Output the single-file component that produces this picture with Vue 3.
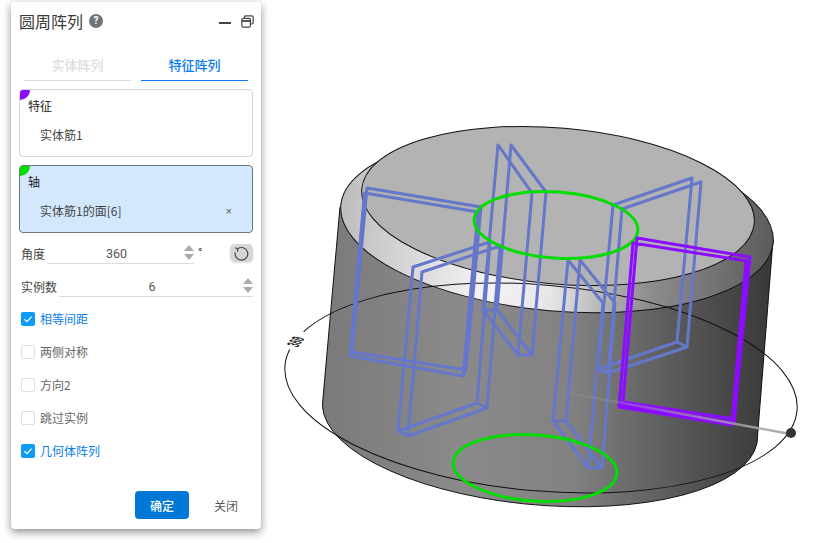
<template>
  <div class="page">
    <svg class="scene" viewBox="0 0 819 543" width="819" height="543">
      <defs>
        <linearGradient id="bodyGrad" gradientUnits="userSpaceOnUse" x1="323" y1="0" x2="773" y2="0">
          <stop offset="0" stop-color="#7a7a7a" />
          <stop offset="0.3" stop-color="#8a8a8a" />
          <stop offset="0.55" stop-color="#828282" />
          <stop offset="0.8" stop-color="#575757" />
          <stop offset="1" stop-color="#383838" />
        </linearGradient>
        <linearGradient id="lipGrad" gradientUnits="userSpaceOnUse" x1="340" y1="0" x2="773" y2="0">
          <stop offset="0" stop-color="#bdbdbd" />
          <stop offset="0.35" stop-color="#f4f4f4" />
          <stop offset="0.5" stop-color="#e6e6e6" />
          <stop offset="0.72" stop-color="#8f8f8f" />
          <stop offset="1" stop-color="#5c5c5c" />
        </linearGradient>
        <linearGradient id="axisGrad" gradientUnits="userSpaceOnUse" x1="553" y1="390" x2="790" y2="434">
          <stop offset="0" stop-color="#aaaaaa" stop-opacity="0" />
          <stop offset="1" stop-color="#a8a8a8" />
        </linearGradient>
      </defs>

      <!-- cylinder -->
      <path
        d="M340 207 L323 398 A217 84 5 0 0 757 443 L773 240 Z"
        fill="url(#bodyGrad)"
        stroke="#111"
        stroke-width="1"
      />
      <ellipse cx="557" cy="224" rx="217" ry="87" transform="rotate(5 557 224)" fill="url(#lipGrad)" stroke="#111" stroke-width="1" />
      <ellipse cx="558" cy="206" rx="197" ry="78" transform="rotate(5 558 206)" fill="#b3b3b3" stroke="#111" stroke-width="1" />

      <!-- sweep circle -->
      <ellipse cx="541" cy="388" rx="257" ry="103" transform="rotate(5 541 388)" fill="none" stroke="#111" stroke-width="1" />
      <path d="M304 332 L289 349" fill="none" stroke="#fff" stroke-width="4" />
      <text class="angle" text-anchor="middle" transform="matrix(0.35 -0.45 1.5 0.35 301 343)">360</text>

      <!-- ribs -->
      <path v-for="(rib, i) in ribs" :key="i" :d="ribPath(rib)" fill="none" stroke="#6577cb" stroke-width="3" stroke-linejoin="round" />
      <path d="M365 193 L351 355" fill="none" stroke="#6577cb" stroke-width="4" />

      <ellipse cx="556" cy="225" rx="82" ry="33" transform="rotate(4 556 225)" fill="none" stroke="#00dd00" stroke-width="3" />
      <ellipse cx="535" cy="468" rx="82" ry="33" transform="rotate(4 535 468)" fill="none" stroke="#00dd00" stroke-width="3" />

      <path :d="ribPath(selectedRib)" fill="none" stroke="#8c0cff" stroke-width="3" stroke-linejoin="round" />
      <path d="M747 261 L733 423" fill="none" stroke="#8c0cff" stroke-width="5" />
      <path d="M620 405 L733 423" fill="none" stroke="#8c0cff" stroke-width="4" />

      <path d="M553 390 L790 434" fill="none" stroke="url(#axisGrad)" stroke-width="2.5" />
      <circle cx="791" cy="433" r="5" fill="#333" />
    </svg>

    <div class="panel">
      <div class="panel-head">
        <span class="panel-title">圆周阵列</span>
        <span class="help">?</span>
        <span class="head-tools">
          <span class="minimize"></span>
          <svg width="13" height="13" viewBox="0 0 13 13" fill="none" stroke="#444" stroke-width="1.2">
            <rect x="0.8" y="3.4" width="8.6" height="8.8" rx="1.6" />
            <path d="M0.8 6 H9.4" stroke-width="1.8" />
            <path d="M3.4 3.2 V2.2 A1.4 1.4 0 0 1 4.8 0.8 H10.8 A1.4 1.4 0 0 1 12.2 2.2 V7.6 A1.4 1.4 0 0 1 10.8 9 H9.6" />
          </svg>
        </span>
      </div>

      <div class="tabs">
        <div class="tab disabled">实体阵列</div>
        <div class="tab active">特征阵列</div>
      </div>

      <div class="select-box">
        <span class="corner purple"></span>
        <div class="box-label">特征</div>
        <div class="box-item">实体筋1</div>
      </div>

      <div class="select-box focused">
        <span class="corner green"></span>
        <div class="box-label">轴</div>
        <div class="box-item">
          实体筋1的面[6]
          <span class="remove">×</span>
        </div>
      </div>

      <div class="field angle-field">
        <label>角度</label>
        <div class="num-input">
          <span class="num-value">360</span>
          <span class="spin"><i class="up"></i><i class="down"></i></span>
        </div>
        <span class="unit">°</span>
        <button class="reverse">
          <svg width="15" height="15" viewBox="0 0 14 14" fill="none" stroke="#444" stroke-width="1.1">
            <path d="M3.4 2.6 A5.9 5.9 0 1 1 1.2 6" />
            <path d="M1 1.6 L3.6 2.6 L3.2 5.2" />
          </svg>
        </button>
      </div>

      <div class="field">
        <label>实例数</label>
        <div class="num-input">
          <span class="num-value">6</span>
          <span class="spin"><i class="up"></i><i class="down"></i></span>
        </div>
      </div>

      <div class="checks">
        <div v-for="opt in options" :key="opt.label" class="check" :class="{ on: opt.checked }">
          <span class="check-box">
            <svg v-if="opt.checked" width="14" height="14" viewBox="0 0 14 14" fill="none" stroke="#fff" stroke-width="1.2">
              <path d="M3.4 7.2 L6 9.6 L10.6 4.6" />
            </svg>
          </span>
          {{ opt.label }}
        </div>
      </div>

      <div class="panel-foot">
        <button class="ok">确定</button>
        <button class="close">关闭</button>
      </div>
    </div>
  </div>
</template>

<script setup>
const ribs = [
  [[367, 188], [481, 207], [466, 370], [352, 352], [365, 193], [478, 212], [463, 376], [350, 356]],
  [[413, 267], [490, 242], [477, 403], [398, 431], [422, 272], [500, 246], [487, 408], [408, 436]],
  [[498, 145], [532, 193], [518, 355], [483, 310], [511, 145], [546, 192], [532, 355], [497, 310]],
  [[568, 260], [603, 303], [588, 468], [553, 421], [580, 260], [615, 303], [602, 468], [566, 421]],
  [[613, 205], [692, 178], [677, 342], [598, 369], [622, 209], [701, 182], [687, 347], [608, 373]],
]
const selectedRib = [[637, 238], [750, 257], [734, 419], [623, 402], [633, 243], [747, 261], [732, 425], [619, 407]]

const options = [
  { label: '相等间距', checked: true },
  { label: '两侧对称', checked: false },
  { label: '方向2', checked: false },
  { label: '跳过实例', checked: false },
  { label: '几何体阵列', checked: true },
]

// two open outlines (no top edge joining the faces) plus the bottom links
const ribPath = (p) => {
  const quad = (q) => 'M' + q.map((c) => c.join(' ')).join(' L') + ' Z'
  const links = [2, 3].map((i) => `M${p[i].join(' ')} L${p[i + 4].join(' ')}`)
  return [quad(p.slice(0, 4)), quad(p.slice(4)), ...links].join(' ')
}
</script>

<style>
body {
  background: #fff;
}
</style>

<style scoped>
.page {
  position: relative;
  width: 819px;
  height: 543px;
  overflow: hidden;
  font-family: "Noto Sans CJK SC", Roboto, sans-serif;
  font-size: 12px;
  color: #333;
}
.scene {
  position: absolute;
  left: 0;
  top: 0;
}
.angle {
  font-family: "Liberation Mono", monospace;
  font-size: 11px;
  fill: #000;
  stroke: #000;
  stroke-width: 0.3px;
}
.panel {
  position: absolute;
  left: 11px;
  top: 2px;
  width: 250px;
  height: 527px;
  box-sizing: border-box;
  padding: 0 8px;
  display: flex;
  flex-direction: column;
  background: #fff;
  border-radius: 4px;
  box-shadow: 0 3px 8px rgba(0, 0, 0, 0.45);
}
.panel-head {
  height: 38px;
  display: flex;
  align-items: center;
  flex-shrink: 0;
}
.panel-title {
  font-size: 16px;
  margin-top: -1px;
  color: #3a3a3a;
}
.help {
  width: 14px;
  height: 14px;
  margin-left: 6px;
  border-radius: 50%;
  background: #6c757d;
  color: #fff;
  font-family: Roboto, sans-serif;
  font-size: 10px;
  font-weight: 700;
  line-height: 14px;
  text-align: center;
}
.head-tools {
  margin-left: auto;
  margin-right: -1px;
  display: flex;
  align-items: center;
  gap: 10px;
}
.minimize {
  width: 12px;
  height: 2px;
  margin-top: 4px;
  background: #444;
}
.tabs {
  display: flex;
  gap: 10px;
  padding: 0 5px;
  flex-shrink: 0;
}
.tab {
  flex: 1;
  height: 41px;
  box-sizing: border-box;
  padding-top: 15px;
  line-height: 19px;
  font-size: 13px;
  font-weight: 500;
  text-align: center;
  border-bottom: 1px solid #ddd;
}
.tab.disabled {
  color: #dcdcdc;
}
.tab.active {
  color: #0a7cf0;
  border-bottom-color: #0a7cf0;
}
.select-box {
  position: relative;
  height: 68px;
  margin-top: 8px;
  box-sizing: border-box;
  flex-shrink: 0;
  border: 1px solid #d5d5d5;
  border-radius: 4px;
  padding: 7px 8px 0;
  overflow: hidden;
}
.select-box.focused {
  background: #d3e7fd;
  border-color: #6c757d;
}
.corner {
  position: absolute;
  left: 0;
  top: 0;
  width: 10px;
  height: 10px;
  border-bottom-right-radius: 10px;
}
.corner.purple {
  background: #8c0cff;
}
.corner.green {
  background: #00dd00;
}
.box-label {
  line-height: 18px;
  color: #222;
}
.box-item {
  position: relative;
  margin-top: 11px;
  padding-left: 12px;
  line-height: 18px;
  color: #444;
}
.remove {
  position: absolute;
  right: 12px;
  top: 0;
  font-family: "Liberation Sans", sans-serif;
  font-size: 11px;
  color: #555;
}
.field {
  display: flex;
  align-items: center;
  height: 20px;
  margin: 13px 0 0 2px;
  flex-shrink: 0;
  color: #444;
}
.field label {
  margin-top: -2px;
}
.angle-field {
  margin-top: 11px;
}
.num-input {
  position: relative;
  flex: 1;
  height: 20px;
  box-sizing: border-box;
  border-bottom: 1px solid #ddd;
  margin-left: 2px;
  text-align: center;
  line-height: 19px;
  font-family: Roboto, sans-serif;
  font-size: 12.5px;
  color: #555;
}
.num-value {
  padding-right: 8px;
}
.spin {
  position: absolute;
  right: 0;
  top: 1px;
  display: flex;
  flex-direction: column;
  gap: 3px;
}
.spin i {
  width: 0;
  height: 0;
  border-left: 5px solid transparent;
  border-right: 5px solid transparent;
}
.spin .up {
  border-bottom: 6px solid #aaa;
}
.spin .down {
  border-top: 6px solid #aaa;
}
.unit {
  width: 36px;
  padding-left: 4px;
  box-sizing: border-box;
  flex-shrink: 0;
  align-self: flex-start;
  font-family: Roboto, sans-serif;
  line-height: 18px;
}
.reverse {
  width: 23px;
  height: 18px;
  flex-shrink: 0;
  margin-top: -2px;
  padding: 0;
  display: flex;
  align-items: center;
  justify-content: center;
  border: none;
  border-radius: 5px;
  background: #d6d6d6;
  box-shadow: 0 1px 2px rgba(0, 0, 0, 0.12);
}
.checks {
  margin: 5px 0 0 2px;
  flex-shrink: 0;
}
.check {
  display: flex;
  align-items: center;
  gap: 5px;
  height: 33px;
  color: #666;
}
.check.on {
  color: #0a7cf0;
}
.check-box {
  width: 14px;
  height: 14px;
  box-sizing: border-box;
  border: 1px solid #dcdfe6;
  border-radius: 2px;
  flex-shrink: 0;
}
.check.on .check-box {
  border: none;
  background: #0d9bf7;
}
.check-box svg {
  display: block;
}
.panel-foot {
  margin-top: auto;
  padding: 0 3px 10px 0;
  display: flex;
  justify-content: flex-end;
  align-items: center;
}
.panel-foot button {
  height: 28px;
  padding: 0;
  border: none;
  border-radius: 4px;
  font-family: inherit;
  font-size: 12px;
}
.ok {
  width: 54px;
  background: #0078d8;
  color: #fff;
  font-weight: 500;
}
.close {
  width: 48px;
  margin-left: 13px;
  background: transparent;
  color: #555;
}
</style>
